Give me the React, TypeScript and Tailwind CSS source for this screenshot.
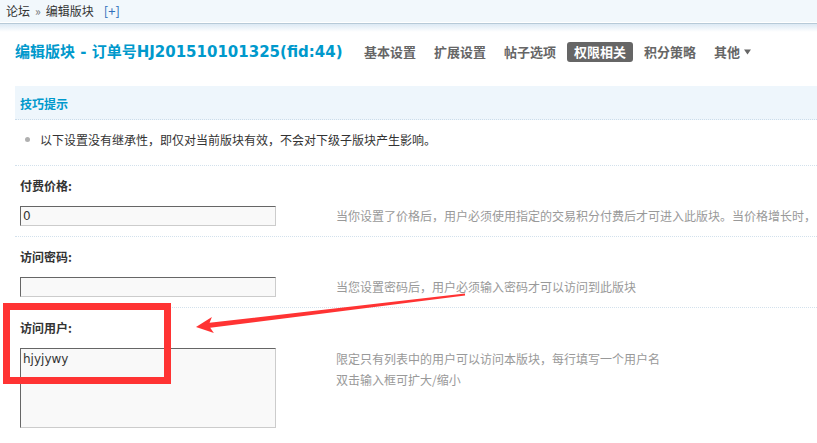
import React from "react";

const tabs = ["基本设置", "扩展设置", "帖子选项", "权限相关", "积分策略"];

function Field({
  label,
  children,
  help,
}: {
  label: string;
  children: React.ReactNode;
  help: React.ReactNode;
}) {
  return (
    <div className="border-t border-dotted border-[#d3e1ec]">
      <div className="h-[40px] flex items-center pl-[5px] text-[12px] font-bold text-[#333]">{label}</div>
      <div className="flex items-start pl-[5px] pb-[10px]">
        {children}
        <div className="ml-[60px] text-[12px] text-[#999] whitespace-nowrap">{help}</div>
      </div>
    </div>
  );
}

const boxCls =
  "w-[256px] shrink-0 border border-t-[#666] border-l-[#666] border-r-[#ccc] border-b-[#ccc] bg-[#f9f9f9] px-[2px] text-[12px] text-[#333] font-['DejaVu_Sans',sans-serif] outline-none";

export default function App() {
  return (
    <div className="relative w-[817px] h-[443px] overflow-hidden bg-white font-['Noto_Sans_CJK_SC',sans-serif]">
      {/* breadcrumb */}
      <div className="h-[22px] bg-[#f2f8fc] flex items-center pl-[6px] text-[12px] text-[#333]">
        <span>论坛</span>
        <span className="mx-[5px] text-[#777]">»</span>
        <span>编辑版块</span>
        <span className="ml-[10px] text-[13px] text-[#2f6fba]">[+]</span>
      </div>
      <div className="h-px bg-white" />
      <div className="h-px bg-[#b7cad8]" />
      <div className="h-[8px] bg-gradient-to-b from-[#dce9f4] to-white" />

      {/* title + tabs */}
      <div className="pt-[10px] pl-[15px] flex items-center h-[30px]">
        <h1 className="w-[342px] shrink-0 whitespace-nowrap text-[15px] font-bold text-[#0099cc] font-['DejaVu_Sans','Noto_Sans_CJK_SC',sans-serif]">
          编辑版块 - 订单号HJ201510101325(fid:44)
        </h1>
        <div className="flex gap-[4px]">
          {tabs.map((t) => (
            <span
              key={t}
              className={
                t === "权限相关"
                  ? "h-[20px] leading-[20px] px-[7px] rounded-[3px] bg-[#666] text-white text-[13px] font-bold"
                  : "h-[20px] leading-[20px] px-[7px] text-[#666] text-[13px] font-bold"
              }
            >
              {t}
            </span>
          ))}
          <span className="h-[20px] flex items-center px-[7px] text-[#666] text-[13px] font-bold">
            其他
            <svg width="7" height="6" viewBox="0 0 7 6" className="ml-[4px]">
              <path d="M0 0.5h7L3.5 5.5z" fill="#666" />
            </svg>
          </span>
        </div>
      </div>

      {/* tips */}
      <div className="ml-[15px] mt-[24px]">
        <div className="h-[34px] pt-[3px] flex items-center pl-[5px] bg-[#eef6fc] border-b border-dotted border-[#cbdcea] text-[12px] font-bold text-[#0099cc]">
          技巧提示
        </div>
        <div className="h-[45px] pt-[12px] flex items-start text-[12px] text-[#333] leading-[16px]">
          <span className="mt-[5px] ml-[10px] w-[5px] h-[5px] rounded-full bg-[#b0b0b0]" />
          <span className="ml-[10px]">以下设置没有继承性，即仅对当前版块有效，不会对下级子版块产生影响。</span>
        </div>

        <Field
          label="付费价格:"
          help={
            <div className="leading-[20px]">
              当你设置了价格后，用户必须使用指定的交易积分付费后才可进入此版块。当价格增长时，
            </div>
          }
        >
          <input className={`${boxCls} h-[20px]`} defaultValue="0" />
        </Field>

        <Field
          label="访问密码:"
          help={<div className="leading-[20px]">当您设置密码后，用户必须输入密码才可以访问到此版块</div>}
        >
          <input className={`${boxCls} h-[20px]`} defaultValue="" />
        </Field>

        <Field
          label="访问用户:"
          help={
            <div className="leading-[21px]">
              <div>限定只有列表中的用户可以访问本版块，每行填写一个用户名</div>
              <div>双击输入框可扩大/缩小</div>
            </div>
          }
        >
          <textarea className={`${boxCls} h-[80px] py-[2px] leading-[16px] resize-none`} defaultValue="hjyjywy" />
        </Field>
      </div>

      {/* annotation overlay */}
      <div className="absolute left-[3px] top-[303px] w-[168px] h-[81px] border-[7px] border-[#ff3333]" />
      <svg className="absolute left-0 top-0" width="817" height="443" viewBox="0 0 817 443">
        <polygon
          points="196,327 211.9,317.1 209.6,322.8 464.9,293.5 465.1,295.5 210.2,327.8 213.9,332.9"
          fill="#ff3333"
        />
      </svg>
    </div>
  );
}
